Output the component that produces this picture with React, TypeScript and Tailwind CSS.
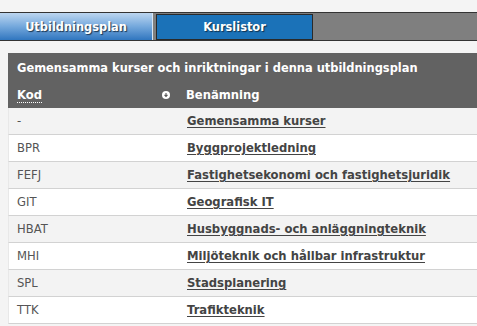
import React from "react";

const rows: [string, string][] = [
  ["-", "Gemensamma kurser"],
  ["BPR", "Byggprojektledning"],
  ["FEFJ", "Fastighetsekonomi och fastighetsjuridik"],
  ["GIT", "Geografisk IT"],
  ["HBAT", "Husbyggnads- och anläggningteknik"],
  ["MHI", "Miljöteknik och hållbar infrastruktur"],
  ["SPL", "Stadsplanering"],
  ["TTK", "Trafikteknik"],
];

export default function App() {
  return (
    <div
      className="w-[477px] h-[326px] overflow-hidden bg-[#f4f4f4] pt-[12px]"
      style={{ fontFamily: '"DejaVu Sans", Verdana, sans-serif' }}
    >
      <div className="flex h-[29px] border-y border-[#333] bg-[#7f7f7f] w-[500px]">
        <div className="w-[153px] h-full flex items-center justify-center pt-[3px] border-r border-[#d8e6f4] bg-gradient-to-b from-[#bcd6f0] via-[#74a8dc] to-[#2f76bf] text-white text-[11.4px] font-bold [text-shadow:1px_1px_1px_#1a3550]">
          Utbildningsplan
        </div>
        <div className="ml-[3px] mt-[1px] w-[157px] h-[26px] flex items-center justify-center pt-[2px] border border-[#2a2a2a] bg-[#1b72b8] text-white text-[11.4px] font-bold [text-shadow:1px_1px_1px_#10304c]">
          Kurslistor
        </div>
      </div>
      <div className="ml-[8px] mt-[12px] w-[480px] text-[11.6px]">
        <div className="bg-[#626262] text-white font-bold">
          <div className="h-[27px] flex items-center pl-[9px] pt-[4px] text-[11.45px]">
            Gemensamma kurser och inriktningar i denna utbildningsplan
          </div>
          <div className="h-[28px] flex items-center pt-[3px]">
            <div className="w-[170px] pl-[9px] flex items-center justify-between pr-[8px]">
              <span className="underline decoration-dotted underline-offset-[3px]">Kod</span>
              <svg width="8" height="8" viewBox="0 0 8 8">
                <circle cx="4" cy="4" r="4" fill="#ffffff" />
                <path d="M4 2 V5 M2.5 3.8 L4 5.4 L5.5 3.8" stroke="#555" strokeWidth="1.1" fill="none" />
              </svg>
            </div>
            <div className="pl-[8px]">Benämning</div>
          </div>
        </div>
        {rows.map(([code, name], i) => (
          <div
            key={code}
            className={`h-[27px] flex items-center pt-[1px] border-b border-[#d2d2d2] border-l border-l-[#e8e8e8] ${i % 2 === 0 ? "bg-[#f3f3f3]" : "bg-white"}`}
          >
            <div className="w-[169px] pl-[8px] text-[#555]">{code}</div>
            <div className="pl-[9px] font-bold text-[#444] underline underline-offset-[2px]">{name}</div>
          </div>
        ))}
      </div>
    </div>
  );
}
